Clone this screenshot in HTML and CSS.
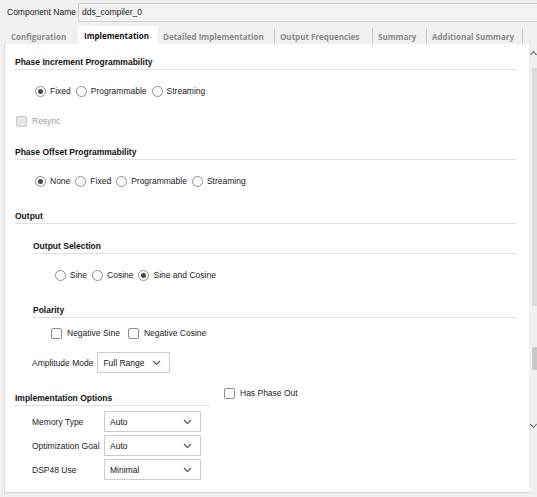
FILE: index.html
```html
<!DOCTYPE html>
<html>
<head>
<meta charset="utf-8">
<link rel="stylesheet" href="styles.css">
</head>
<body>
<div class="top">
  <span class="top-label">Component Name</span>
  <div class="name-field">dds_compiler_0</div>
</div>
<div class="tabs">
  <div class="tab">Configuration</div>
  <div class="tab active">Implementation</div>
  <div class="tab">Detailed Implementation</div>
  <div class="tab">Output Frequencies</div>
  <div class="tab">Summary</div>
  <div class="tab">Additional Summary</div>
</div>
<div class="frame">
  <div class="panel">
    <div class="heading">Phase Increment Programmability</div>
    <div class="row radios ind1">
      <span class="radio on"></span><span class="opt">Fixed</span>
      <span class="radio"></span><span class="opt">Programmable</span>
      <span class="radio"></span><span class="opt">Streaming</span>
    </div>
    <div class="row resync">
      <span class="check disabled"></span><span class="opt dim">Resync</span>
    </div>
    <div class="heading h-offset">Phase Offset Programmability</div>
    <div class="row radios ind1">
      <span class="radio on"></span><span class="opt">None</span>
      <span class="radio"></span><span class="opt">Fixed</span>
      <span class="radio"></span><span class="opt">Programmable</span>
      <span class="radio"></span><span class="opt">Streaming</span>
    </div>
    <div class="heading h-output">Output</div>
    <div class="sub">
      <div class="heading h-sel">Output Selection</div>
      <div class="row radios ind2">
        <span class="radio"></span><span class="opt">Sine</span>
        <span class="radio"></span><span class="opt">Cosine</span>
        <span class="radio on"></span><span class="opt">Sine and Cosine</span>
      </div>
      <div class="heading h-pol">Polarity</div>
      <div class="row checks">
        <span class="check"></span><span class="opt wide">Negative Sine</span>
        <span class="check"></span><span class="opt">Negative Cosine</span>
      </div>
    </div>
    <div class="row amp">
      <span class="lbl">Amplitude Mode</span>
      <div class="select s-amp"><span>Full Range</span><svg width="9" height="6" viewBox="0 0 9 6"><path d="M1 1 L4.5 4.5 L8 1" fill="none" stroke="#555" stroke-width="1.2"/></svg></div>
    </div>
    <div class="impl">
      <div class="impl-left">
        <div class="heading h-impl">Implementation Options</div>
        <div class="form">
          <div class="frow"><span class="flbl">Memory Type</span><div class="select s-form"><span>Auto</span><svg width="9" height="6" viewBox="0 0 9 6"><path d="M1 1 L4.5 4.5 L8 1" fill="none" stroke="#555" stroke-width="1.2"/></svg></div></div>
          <div class="frow"><span class="flbl">Optimization Goal</span><div class="select s-form"><span>Auto</span><svg width="9" height="6" viewBox="0 0 9 6"><path d="M1 1 L4.5 4.5 L8 1" fill="none" stroke="#555" stroke-width="1.2"/></svg></div></div>
          <div class="frow"><span class="flbl">DSP48 Use</span><div class="select s-form"><span>Minimal</span><svg width="9" height="6" viewBox="0 0 9 6"><path d="M1 1 L4.5 4.5 L8 1" fill="none" stroke="#555" stroke-width="1.2"/></svg></div></div>
        </div>
      </div>
      <div class="impl-right">
        <span class="check"></span><span class="opt">Has Phase Out</span>
      </div>
    </div>
  </div>
  <div class="scrollbar">
    <div class="arrow up"></div>
    <div class="thumb1"></div>
    <div class="thumb2"></div>
    <div class="arrow down"></div>
  </div>
</div>
</body>
</html>
```
FILE: styles.css
```css
* { box-sizing: border-box; }
html, body { margin: 0; padding: 0; }
body {
  width: 537px;
  height: 497px;
  overflow: hidden;
  background: #f0f0f0;
  font-family: "Liberation Sans", Arial, sans-serif;
  font-size: 8.5px;
  color: #222;
  white-space: nowrap;
}
.top {
  display: flex;
  align-items: center;
  height: 23px;
  padding-top: 1px;
}
.top-label {
  padding-left: 7px;
  width: 78px;
  color: #222;
}
.name-field {
  flex: 1;
  height: 19px;
  background: #f2f2f2;
  border: 1px solid #cfcfcf;
  border-right: none;
  display: flex;
  align-items: center;
  padding-left: 3px;
  color: #222;
}
.tabs {
  display: flex;
  height: 18px;
  margin-top: 3px;
  padding-left: 4px;
  font-family: "Open Sans", "Liberation Sans", sans-serif;
  font-weight: 700;
  font-size: 8px;
  color: #8a8a8a;
}
.tab {
  display: flex;
  align-items: center;
  padding: 0 5px;
  border-right: 1px solid #c8c8c8;
  margin: 2px 0 0 0;
  overflow: hidden;
}
.tab:first-child { padding-left: 7px; }
.tab.active {
  background: #fff;
  color: #111;
  border-right: none;
  margin: 0;
  padding: 0 6px 0 6px;
}
.tab:nth-child(1) { width: 74px; border-right: none; }
.tab:nth-child(2) { width: 80px; }
.tab:nth-child(3) { width: 117px; }
.tab:nth-child(4) { width: 98px; }
.tab:nth-child(5) { width: 54px; }
.tab:nth-child(6) { width: 96px; }
.frame {
  display: flex;
  height: 449px;
  margin-left: 4px;
}
.panel {
  width: 525px;
  background: #fff;
  border-left: 1px solid #dadada;
  border-bottom: 1px solid #d4d4d4;
  padding: 11px 13px 0 10px;
}
.heading {
  font-weight: 700;
  color: #111;
  height: 15px;
  line-height: 14px;
  border-bottom: 1px solid #e0e0e0;
}
.row {
  display: flex;
  align-items: center;
  height: 20px;
}
.radios.ind1 { margin-top: 11px; padding-left: 20px; }
.radios.ind2 { margin-top: 11px; padding-left: 22px; }
.radio {
  width: 11px;
  height: 11px;
  border: 1px solid #8d8d8d;
  border-radius: 50%;
  margin-right: 4px;
  position: relative;
  flex: none;
}
.radio.on::after {
  content: "";
  position: absolute;
  left: 2px;
  top: 2px;
  width: 5px;
  height: 5px;
  border-radius: 50%;
  background: #444;
}
.opt { margin-right: 5px; color: #222; }
.opt.wide { margin-right: 8px; }
.opt.dim { color: #9a9a9a; }
.check {
  width: 11px;
  height: 11px;
  border: 1px solid #8d8d8d;
  border-radius: 2px;
  margin-right: 5px;
  flex: none;
}
.check.disabled { border-color: #c8c8c8; background: #e6e6e6; }
.resync { margin-top: 10px; padding-left: 1px; }
.h-offset { margin-top: 14px; }
.h-output { margin-top: 18px; }
.sub { padding-left: 18px; }
.h-sel { margin-top: 15px; }
.h-pol { margin-top: 18px; }
.checks { margin-top: 5px; padding-left: 18px; }
.amp { margin-top: 9px; padding-left: 17px; height: 21px; }
.lbl { margin-right: 4px; }
.select {
  display: flex;
  align-items: center;
  justify-content: space-between;
  height: 21px;
  border: 1px solid #cdcdcd;
  background: #fff;
  padding: 0 8px 0 5px;
  color: #111;
}
.select svg { flex: none; }
.s-amp { width: 73px; }
.impl {
  display: flex;
  margin-top: 13px;
}
.impl-left { width: 195px; }
.h-impl { margin-top: 5px; }
.form {
  display: flex;
  flex-direction: column;
  gap: 3px;
  margin-top: 5px;
  padding-left: 17px;
}
.frow { display: flex; align-items: center; }
.flbl { width: 72px; }
.s-form { width: 97px; }
.impl-right {
  display: flex;
  align-items: flex-start;
  padding-left: 14px;
  padding-top: 2px;
  height: 16px;
}
.impl-right .check { margin-top: 0; }
.scrollbar {
  flex: 1;
  position: relative;
  background: #f0f0f0;
}
.thumb1 {
  position: absolute;
  left: 3px;
  top: 24px;
  width: 6px;
  height: 238px;
  background: #dcdcdc;
}
.thumb2 {
  position: absolute;
  left: 3px;
  top: 303px;
  width: 6px;
  height: 23px;
  background: #c8c8c8;
  border-radius: 2px;
}
.arrow {
  position: absolute;
  left: 2px;
  width: 5px;
  height: 5px;
  border-left: 1px solid #666;
  border-top: 1px solid #666;
}
.arrow.up { top: 8px; transform: rotate(45deg); }
.arrow.down { top: 378px; transform: rotate(225deg); }
```
